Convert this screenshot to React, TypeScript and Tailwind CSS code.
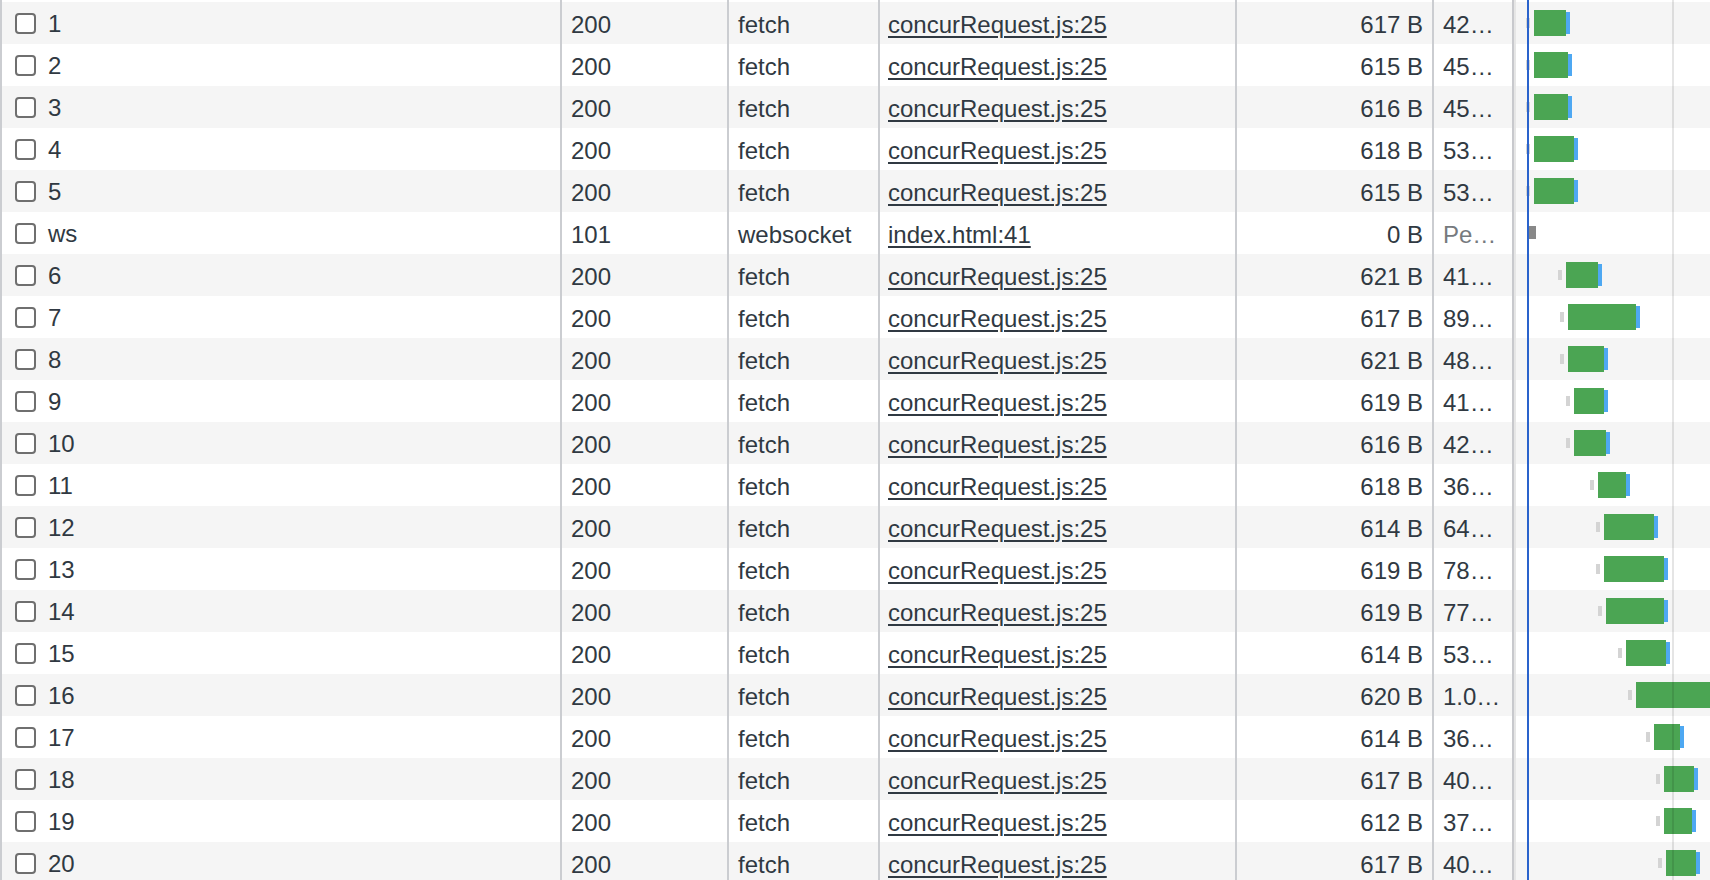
import React from 'react';

type Req = {
  name: string;
  status: string;
  type: string;
  initiator: string;
  size: string;
  time: string;
  pending?: boolean;
  // waterfall, x positions relative to the waterfall column
  tick?: number;
  start?: number;
  end?: number;
  dl?: number;
};

const W = 1516; // left edge of the waterfall column

const rows: Req[] = [
  { name: '1', status: '200', type: 'fetch', initiator: 'concurRequest.js:25', size: '617 B', time: '42…', tick: 1526, start: 1534, end: 1566, dl: 1570 },
  { name: '2', status: '200', type: 'fetch', initiator: 'concurRequest.js:25', size: '615 B', time: '45…', tick: 1526, start: 1534, end: 1568, dl: 1572 },
  { name: '3', status: '200', type: 'fetch', initiator: 'concurRequest.js:25', size: '616 B', time: '45…', tick: 1526, start: 1534, end: 1568, dl: 1572 },
  { name: '4', status: '200', type: 'fetch', initiator: 'concurRequest.js:25', size: '618 B', time: '53…', tick: 1526, start: 1534, end: 1574, dl: 1578 },
  { name: '5', status: '200', type: 'fetch', initiator: 'concurRequest.js:25', size: '615 B', time: '53…', tick: 1526, start: 1534, end: 1574, dl: 1578 },
  { name: 'ws', status: '101', type: 'websocket', initiator: 'index.html:41', size: '0 B', time: 'Pe…', pending: true },
  { name: '6', status: '200', type: 'fetch', initiator: 'concurRequest.js:25', size: '621 B', time: '41…', tick: 1558, start: 1566, end: 1598, dl: 1602 },
  { name: '7', status: '200', type: 'fetch', initiator: 'concurRequest.js:25', size: '617 B', time: '89…', tick: 1560, start: 1568, end: 1636, dl: 1640 },
  { name: '8', status: '200', type: 'fetch', initiator: 'concurRequest.js:25', size: '621 B', time: '48…', tick: 1560, start: 1568, end: 1604, dl: 1608 },
  { name: '9', status: '200', type: 'fetch', initiator: 'concurRequest.js:25', size: '619 B', time: '41…', tick: 1566, start: 1574, end: 1604, dl: 1608 },
  { name: '10', status: '200', type: 'fetch', initiator: 'concurRequest.js:25', size: '616 B', time: '42…', tick: 1566, start: 1574, end: 1606, dl: 1610 },
  { name: '11', status: '200', type: 'fetch', initiator: 'concurRequest.js:25', size: '618 B', time: '36…', tick: 1590, start: 1598, end: 1626, dl: 1630 },
  { name: '12', status: '200', type: 'fetch', initiator: 'concurRequest.js:25', size: '614 B', time: '64…', tick: 1596, start: 1604, end: 1654, dl: 1658 },
  { name: '13', status: '200', type: 'fetch', initiator: 'concurRequest.js:25', size: '619 B', time: '78…', tick: 1596, start: 1604, end: 1664, dl: 1668 },
  { name: '14', status: '200', type: 'fetch', initiator: 'concurRequest.js:25', size: '619 B', time: '77…', tick: 1598, start: 1606, end: 1664, dl: 1668 },
  { name: '15', status: '200', type: 'fetch', initiator: 'concurRequest.js:25', size: '614 B', time: '53…', tick: 1618, start: 1626, end: 1666, dl: 1670 },
  { name: '16', status: '200', type: 'fetch', initiator: 'concurRequest.js:25', size: '620 B', time: '1.0…', tick: 1628, start: 1636, end: 1730, dl: 1734 },
  { name: '17', status: '200', type: 'fetch', initiator: 'concurRequest.js:25', size: '614 B', time: '36…', tick: 1646, start: 1654, end: 1680, dl: 1684 },
  { name: '18', status: '200', type: 'fetch', initiator: 'concurRequest.js:25', size: '617 B', time: '40…', tick: 1656, start: 1664, end: 1694, dl: 1698 },
  { name: '19', status: '200', type: 'fetch', initiator: 'concurRequest.js:25', size: '612 B', time: '37…', tick: 1656, start: 1664, end: 1692, dl: 1696 },
  { name: '20', status: '200', type: 'fetch', initiator: 'concurRequest.js:25', size: '617 B', time: '40…', tick: 1658, start: 1666, end: 1696, dl: 1700 },
];

function Waterfall({ r }: { r: Req }) {
  return (
    <div className="relative h-full flex-1 overflow-hidden">
      {r.pending ? (
        <div className="absolute top-[14px] h-[13px] bg-[#888888]" style={{ left: 1529 - W, width: 7 }} />
      ) : (
        <>
          <div className="absolute top-[16px] h-[10px] w-[4px] bg-[#d4d4d4]" style={{ left: r.tick! - W }} />
          <div className="absolute top-[10px] h-[22px] bg-[#4ea8f2]" style={{ left: r.end! - W, width: r.dl! - r.end! }} />
          <div className="absolute top-[8px] h-[26px] bg-[#4ba553]" style={{ left: r.start! - W, width: r.end! - r.start! }} />
        </>
      )}
      {/* timeline markers */}
      <div className="absolute top-0 bottom-0 left-[11px] w-[2px] bg-[#2a63cc]" />
      <div className="absolute top-0 bottom-0 left-[156px] w-[2px] bg-black/10" />
    </div>
  );
}

function Row({ r, i }: { r: Req; i: number }) {
  return (
    <div className={`flex h-[42px] leading-[42px] ${i % 2 === 0 ? 'bg-[#f5f5f5]' : 'bg-white'}`}>
      <div className="w-[562px] shrink-0 border-x-2 border-[#cbcdd1] flex items-center pl-[13px]">
        <span className="w-[21px] h-[21px] rounded-[4px] border-2 border-[#6f6f6f] bg-white shrink-0" />
        <span className="ml-[12px] pt-[2px]">{r.name}</span>
      </div>
      <div className="w-[167px] shrink-0 border-r-2 border-[#cbcdd1] pl-[9px] pt-[2px]">{r.status}</div>
      <div className="w-[151px] shrink-0 border-r-2 border-[#cbcdd1] pl-[9px] pt-[2px]">{r.type}</div>
      <div className="w-[357px] shrink-0 border-r-2 border-[#cbcdd1] pl-[8px] pt-[2px]">
        <span className="underline decoration-[2px] underline-offset-[3px]">{r.initiator}</span>
      </div>
      <div className="w-[197px] shrink-0 border-r-2 border-[#cbcdd1] pr-[9px] pt-[2px] text-right">{r.size}</div>
      <div className={`w-[78px] shrink-0 pl-[9px] pt-[2px] whitespace-nowrap overflow-hidden ${r.pending ? 'text-[#767a7e]' : ''}`}>
        {r.time}
      </div>
      <div className="w-[2px] shrink-0 bg-[#c8c9cd]" />
      <div className="w-[2px] shrink-0 bg-[#e6e6e6]" />
      <Waterfall r={r} />
    </div>
  );
}

export default function App() {
  return (
    <div
      className="w-[1710px] h-[880px] overflow-hidden bg-white text-[24px] text-[#303942]"
      style={{ fontFamily: '"Liberation Sans", Arial, sans-serif' }}
    >
      <div className="h-[2px] flex">
        <div className="w-[562px] border-x-2 border-[#cbcdd1]" />
        <div className="w-[167px] border-r-2 border-[#cbcdd1]" />
        <div className="w-[151px] border-r-2 border-[#cbcdd1]" />
        <div className="w-[357px] border-r-2 border-[#cbcdd1]" />
        <div className="w-[197px] border-r-2 border-[#cbcdd1]" />
        <div className="w-[78px]" />
        <div className="w-[2px] bg-[#c8c9cd]" />
        <div className="w-[2px] bg-[#e6e6e6]" />
        <div className="relative flex-1">
          <div className="absolute top-0 bottom-0 left-[11px] w-[2px] bg-[#2a63cc]" />
          <div className="absolute top-0 bottom-0 left-[156px] w-[2px] bg-black/10" />
        </div>
      </div>
      {rows.map((r, i) => (
        <Row key={r.name} r={r} i={i} />
      ))}
    </div>
  );
}
